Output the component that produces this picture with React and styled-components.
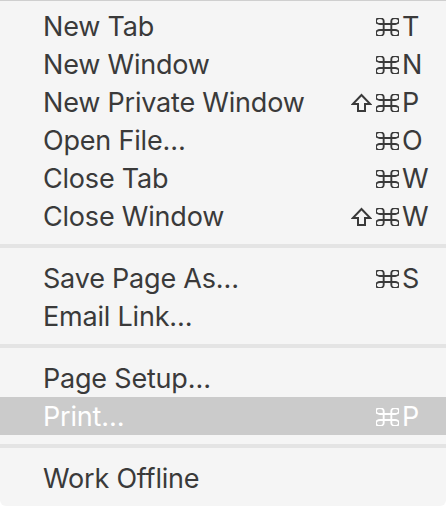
import React from 'react'
import styled, { createGlobalStyle } from 'styled-components'

const GlobalStyle = createGlobalStyle`
  html, body {
    margin: 0;
    padding: 0;
    background: #ffffff;
  }
`

const Menu = styled.div`
  width: 446px;
  height: 506px;
  box-sizing: border-box;
  background: #f5f5f5;
  border-top: 1px solid #cfcfcf;
  border-radius: 0 0 6px 6px;
  padding-top: 6px;
  font-family: Inter, "Liberation Sans", sans-serif;
  font-size: 27px;
  color: #3a3a3a;
  overflow: hidden;
`

const Item = styled.div`
  display: grid;
  grid-template-columns: 1fr auto 44px;
  align-items: center;
  height: 38px;
  background: ${p => (p.$active ? '#cbcbcb' : 'transparent')};
  color: ${p => (p.$active ? '#ffffff' : '#3a3a3a')};
`

const Label = styled.span`
  padding-left: 43px;
  white-space: nowrap;
  letter-spacing: -0.2px;
`

const Mods = styled.span`
  display: flex;
  align-items: center;
  justify-content: flex-end;
  gap: 4px;
  padding-right: 3px;
  height: 38px;
`

const Key = styled.span`
  letter-spacing: 0;
`

const Separator = styled.div`
  height: 24px;
  display: flex;
  align-items: center;

  &::after {
    content: '';
    flex: 1;
    height: 4px;
    margin-top: -2px;
    background: #e4e4e4;
  }
`

const Glyph = styled.svg`
  display: block;
  fill: none;
  stroke: currentColor;
  stroke-linejoin: miter;
  margin-top: 1px;
`

const Cmd = () => (
  <Glyph width="23" height="18" viewBox="3 3 18 18" preserveAspectRatio="none">
    <path
      d="M15 6v12a3 3 0 1 0 3-3H6a3 3 0 1 0 3 3V6a3 3 0 1 0-3 3h12a3 3 0 1 0-3-3"
      strokeWidth="1.9"
      vectorEffect="non-scaling-stroke"
    />
  </Glyph>
)

const Shift = () => (
  <Glyph width="21" height="19" viewBox="0 0 21 19">
    <path d="M7 18V11H1.8L10.5 2l8.7 9H14v7z" strokeWidth="2" />
  </Glyph>
)

const groups = [
  [
    ['New Tab', false, 'T'],
    ['New Window', false, 'N'],
    ['New Private Window', true, 'P'],
    ['Open File…', false, 'O'],
    ['Close Tab', false, 'W'],
    ['Close Window', true, 'W'],
  ],
  [
    ['Save Page As…', false, 'S'],
    ['Email Link…'],
  ],
  [
    ['Page Setup…'],
    ['Print…', false, 'P', true],
  ],
  [['Work Offline']],
]

export default function App() {
  return (
    <>
      <GlobalStyle />
      <Menu>
        {groups.map((items, gi) => (
          <React.Fragment key={gi}>
            {gi > 0 && <Separator />}
            {items.map(([label, shift, key, active]) => (
              <Item key={label} $active={active}>
                <Label>{label}</Label>
                <Mods>
                  {shift && <Shift />}
                  {key && <Cmd />}
                </Mods>
                <Key>{key}</Key>
              </Item>
            ))}
          </React.Fragment>
        ))}
      </Menu>
    </>
  )
}
